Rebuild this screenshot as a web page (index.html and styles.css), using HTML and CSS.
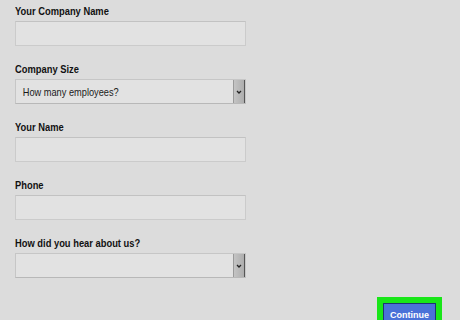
FILE: index.html
```html
<html>

<head>
    <title>Sign Up</title>
    <link rel="stylesheet" href="styles.css">
</head>

<body>
    <main class="form">
        <div class="group">
            <label class="label">Your Company Name</label>
            <div class="field"></div>
        </div>
        <div class="group">
            <label class="label">Company Size</label>
            <div class="field select">
                <span class="value">How many employees?</span>
                <span class="arrow">
                    <svg width="6" height="4" viewBox="0 0 6 4"><path d="M1 1 L3 3 L5 1" fill="none" stroke="#222" stroke-width="1.3"/></svg>
                </span>
            </div>
        </div>
        <div class="group">
            <label class="label">Your Name</label>
            <div class="field"></div>
        </div>
        <div class="group">
            <label class="label">Phone</label>
            <div class="field"></div>
        </div>
        <div class="group">
            <label class="label">How did you hear about us?</label>
            <div class="field select">
                <span class="value"></span>
                <span class="arrow">
                    <svg width="6" height="4" viewBox="0 0 6 4"><path d="M1 1 L3 3 L5 1" fill="none" stroke="#222" stroke-width="1.3"/></svg>
                </span>
            </div>
        </div>
        <div class="actions">
            <div class="highlight">
                <button class="btn-continue">Continue</button>
            </div>
        </div>
    </main>
</body>

</html>
```

FILE: styles.css
```css
body {
    margin: 0;
    background: #dcdcdc;
    font-family: "Liberation Sans", Arial, sans-serif;
    color: #111;
    overflow: hidden;
}

.form {
    display: flex;
    flex-direction: column;
    gap: 16px;
    padding: 4px 0 0 15px;
}

.group {
    display: flex;
    flex-direction: column;
    width: 231px;
}

/* the text in the shot is a narrow sans, so squeeze Arial a bit */
.label {
    align-self: flex-start;
    font-size: 11px;
    font-weight: bold;
    line-height: 14px;
    margin-bottom: 3px;
    transform: scaleX(0.85);
    transform-origin: left;
}

.field {
    height: 23px;
    background: #e2e2e2;
    border: 1px solid #cbcbcb;
    border-top-color: #c2c2c2;
}

.select {
    display: flex;
    align-items: center;
    border-color: #c6c6c6;
    border-bottom-color: #b8b8b8;
}

.value {
    flex: 1;
    padding-left: 8px;
    font-size: 11px;
    color: #1a1a1a;
    transform: scaleX(0.84);
    transform-origin: left;
}

.arrow {
    display: flex;
    align-items: center;
    justify-content: center;
    width: 10px;
    height: 100%;
    background: linear-gradient(90deg, #c4c4c4, #adadad);
    border-left: 1px solid #9a9a9a;
    border-right: 1px solid #555;
}

.actions {
    display: flex;
    justify-content: flex-end;
    padding-right: 18px;
    margin-top: 3px;
}

.highlight {
    background: #19e619;
    padding: 6px 6px 0 6px;
    height: 30px;
}

.btn-continue {
    width: 53px;
    height: 22px;
    padding: 2px 0 0 0;
    background: #4a72d8;
    border: 1px solid #1f3473;
    color: #fff;
    font-family: "Liberation Sans", Arial, sans-serif;
    font-size: 9px;
    font-weight: bold;
}
```
